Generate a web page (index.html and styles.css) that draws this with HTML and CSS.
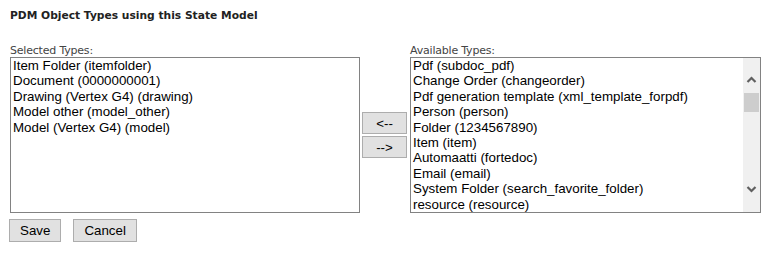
FILE: index.html
```html
<!DOCTYPE html>
<html lang="en">
<head>
  <meta charset="UTF-8" />
  <title>State Model – Object Types</title>
  <link rel="stylesheet" href="styles.css">
</head>
<body>

  <div class="page">
    <h1>PDM Object Types using this State Model</h1>

    <!-- Type picker -->
    <div class="picker">
      <label class="caption">Selected Types:</label>
      <span></span>
      <label class="caption">Available Types:</label>

      <div class="listbox">
        <div class="options">
          <div class="opt">Item Folder (itemfolder)</div>
          <div class="opt">Document (0000000001)</div>
          <div class="opt">Drawing (Vertex G4) (drawing)</div>
          <div class="opt">Model other (model_other)</div>
          <div class="opt">Model (Vertex G4) (model)</div>
        </div>
      </div>

      <div class="movers">
        <button class="btn mover">&lt;--</button>
        <button class="btn mover">--&gt;</button>
      </div>

      <div class="listbox">
        <div class="options">
          <div class="opt">Pdf (subdoc_pdf)</div>
          <div class="opt">Change Order (changeorder)</div>
          <div class="opt">Pdf generation template (xml_template_forpdf)</div>
          <div class="opt">Person (person)</div>
          <div class="opt">Folder (1234567890)</div>
          <div class="opt">Item (item)</div>
          <div class="opt">Automaatti (fortedoc)</div>
          <div class="opt">Email (email)</div>
          <div class="opt">System Folder (search_favorite_folder)</div>
          <div class="opt">resource (resource)</div>
        </div>
        <div class="scrollbar">
          <svg class="arrow" width="17" height="34" viewBox="0 0 17 34">
            <path d="M4.5 24 L8.5 20 L12.5 24" fill="none" stroke="#606060" stroke-width="2.2"/>
          </svg>
          <div class="track">
            <div class="thumb"></div>
          </div>
          <svg class="arrow" width="17" height="34" viewBox="0 0 17 34">
            <path d="M4.5 9 L8.5 13 L12.5 9" fill="none" stroke="#606060" stroke-width="2.2"/>
          </svg>
        </div>
      </div>
    </div>

    <div class="actions">
      <button class="btn">Save</button>
      <button class="btn">Cancel</button>
    </div>
  </div>

</body>
</html>
```

FILE: styles.css
```css
body {
  margin: 0;
  background: #fff;
  font-family: Tahoma, 'DejaVu Sans', sans-serif;
  color: #333;
}

.page {
  padding: 9px 10px;
}

h1 {
  font-size: 10.7px;
  font-weight: bold;
  color: #222;
  margin: 0 0 21px;
  line-height: 14px;
}

.picker {
  display: grid;
  grid-template-columns: 350px 50px 351px;
  align-items: end;
}

.caption {
  font-size: 11px;
  line-height: 13px;
  color: #444;
  letter-spacing: -0.2px;
}

.listbox {
  display: flex;
  height: 156px;
  box-sizing: border-box;
  border: 1px solid #828282;
  background: #fff;
  font-family: 'Liberation Sans', Arial, sans-serif;
  font-size: 13.33px;
  color: #000;
  overflow: hidden;
}

.options {
  flex: 1;
}

.opt {
  line-height: 15.4px;
  padding: 0 2px;
  white-space: nowrap;
}

.scrollbar {
  width: 17px;
  display: flex;
  flex-direction: column;
  background: #f0f0f0;
}

.arrow {
  display: block;
}

.track {
  flex: 1;
  padding-top: 1px;
}

.thumb {
  margin: 0 1px 0 1px;
  height: 19px;
  background: #cdcdcd;
}

.movers {
  align-self: center;
  display: flex;
  flex-direction: column;
  gap: 2px;
  padding-left: 2px;
}

.btn {
  font-family: 'Liberation Sans', Arial, sans-serif;
  font-size: 13.33px;
  color: #000;
  background: #e1e1e1;
  border: 1px solid #adadad;
  border-radius: 0;
  padding: 0 9px;
  height: 22px;
  margin: 0;
}

.mover {
  width: 45px;
}

.actions {
  display: flex;
  gap: 12px;
  margin-top: 6px;
  margin-left: -1px;
}

.actions .btn {
  height: 23px;
  padding: 0 10px;
}
```
